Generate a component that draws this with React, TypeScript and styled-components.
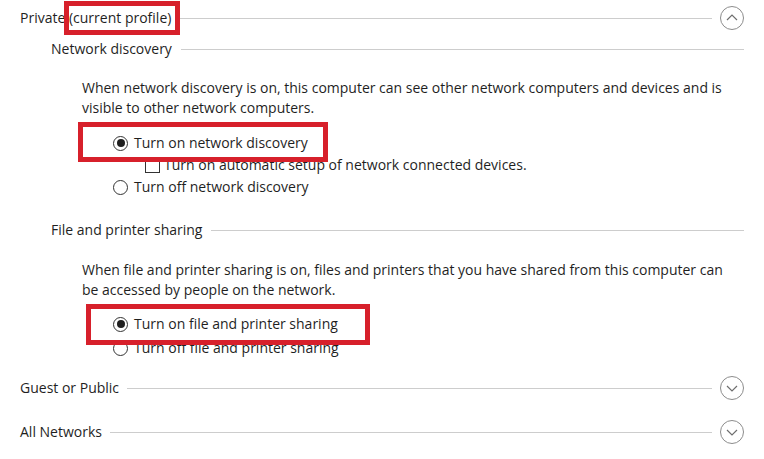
import React from "react";
import styled, { createGlobalStyle } from "styled-components";

const GlobalStyle = createGlobalStyle`
  html, body {
    margin: 0;
    padding: 0;
    background: #ffffff;
  }
  body {
    font-family: "Open Sans", "Noto Sans", "Liberation Sans", sans-serif;
    font-size: 14px;
    color: #1f1f1f;
  }
`;

const Page = styled.div`
  width: 764px;
  height: 459px;
  overflow: hidden;
  padding-left: 20px;
  box-sizing: border-box;
`;

const ProfileRow = styled.div<{ $mt?: number }>`
  display: flex;
  align-items: center;
  height: 36px;
  margin-top: ${(p) => p.$mt ?? 0}px;
  padding-right: 20px;
`;

const SubHeading = styled.div<{ $mt: number }>`
  display: flex;
  align-items: center;
  height: 20px;
  margin-top: ${(p) => p.$mt}px;
  margin-left: 31px;
  padding-right: 20px;
`;

const Label = styled.span`
  position: relative;
  white-space: nowrap;
  line-height: 20px;
`;

const Rule = styled.div<{ $gap: number }>`
  flex: 1;
  height: 1px;
  background: #cdcdcd;
  margin-left: ${(p) => p.$gap}px;
  margin-right: 8px;
`;

const SubRule = styled.div`
  flex: 1;
  height: 1px;
  background: #cdcdcd;
  margin-left: 9px;
`;

const Section = styled.div`
  margin-left: 62px;
`;

const Paragraph = styled.p<{ $mt: number }>`
  margin: ${(p) => p.$mt}px 0 0;
  width: 650px;
  line-height: 20px;
`;

const OptionRow = styled.div<{ $mt: number; $indent?: number }>`
  position: relative;
  display: flex;
  align-items: center;
  height: 20px;
  margin-top: ${(p) => p.$mt}px;
  margin-left: ${(p) => 31 + (p.$indent ?? 0)}px;
  white-space: nowrap;
`;

const Radio = styled.span<{ $checked?: boolean }>`
  position: relative;
  width: 13px;
  height: 13px;
  border: 1px solid #333333;
  border-radius: 50%;
  margin-right: 6px;
  flex: none;

  &::after {
    content: "";
    display: ${(p) => (p.$checked ? "block" : "none")};
    position: absolute;
    left: 2.5px;
    top: 2.5px;
    width: 8px;
    height: 8px;
    border-radius: 50%;
    background: #1f1f1f;
  }
`;

const Checkbox = styled.span`
  width: 13px;
  height: 13px;
  border: 1px solid #333333;
  margin-right: 4px;
  flex: none;
`;

const Highlight = styled.span<{ $l: number; $t: number; $w: number; $h: number }>`
  position: absolute;
  left: ${(p) => p.$l}px;
  top: ${(p) => p.$t}px;
  width: ${(p) => p.$w}px;
  height: ${(p) => p.$h}px;
  border: 5px solid #d7202b;
  box-sizing: border-box;
  z-index: 2;
  pointer-events: none;
`;

const ChevronButton = styled.span`
  width: 24px;
  height: 24px;
  flex: none;
  display: flex;
`;

function Chevron({ up }: { up?: boolean }) {
  return (
    <ChevronButton>
      <svg width="24" height="24" viewBox="0 0 24 24">
        <circle cx="12" cy="12" r="11.5" fill="none" stroke="#8c8c8c" strokeWidth="1" />
        <path
          d={up ? "M7 14 L12 9 L17 14" : "M7 10 L12 15 L17 10"}
          fill="none"
          stroke="#6e6e6e"
          strokeWidth="1.2"
        />
      </svg>
    </ChevronButton>
  );
}

export default function App() {
  return (
    <>
      <GlobalStyle />
      <Page>
        <ProfileRow>
          <Label>
            Private{" "}
            <Label>
              (current profile)
              <Highlight $l={-5} $t={-7} $w={116} $h={34} />
            </Label>
          </Label>
          <Rule $gap={4} />
          <Chevron up />
        </ProfileRow>

        <SubHeading $mt={3}>
          <Label>Network discovery</Label>
          <SubRule />
        </SubHeading>

        <Section>
          <Paragraph $mt={19}>
            When network discovery is on, this computer can see other network computers and devices and is
            visible to other network computers.
          </Paragraph>
        </Section>

        <OptionRow $mt={15} $indent={62}>
          <Radio $checked />
          <Label>Turn on network discovery</Label>
          <Highlight $l={-35} $t={-11} $w={250} $h={40} />
        </OptionRow>
        <OptionRow $mt={2} $indent={94}>
          <Checkbox />
          <Label>Turn on automatic setup of network connected devices.</Label>
        </OptionRow>
        <OptionRow $mt={2} $indent={62}>
          <Radio />
          <Label>Turn off network discovery</Label>
        </OptionRow>

        <SubHeading $mt={23}>
          <Label>File and printer sharing</Label>
          <SubRule />
        </SubHeading>

        <Section>
          <Paragraph $mt={20}>
            When file and printer sharing is on, files and printers that you have shared from this computer can
            be accessed by people on the network.
          </Paragraph>
        </Section>

        <OptionRow $mt={14} $indent={62}>
          <Radio $checked />
          <Label>Turn on file and printer sharing</Label>
          <Highlight $l={-27} $t={-10} $w={284} $h={41} />
        </OptionRow>
        <OptionRow $mt={4} $indent={62}>
          <Radio />
          <Label>Turn off file and printer sharing</Label>
        </OptionRow>

        <ProfileRow $mt={12}>
          <Label>Guest or Public</Label>
          <Rule $gap={8} />
          <Chevron />
        </ProfileRow>

        <ProfileRow $mt={8}>
          <Label>All Networks</Label>
          <Rule $gap={8} />
          <Chevron />
        </ProfileRow>
      </Page>
    </>
  );
}
